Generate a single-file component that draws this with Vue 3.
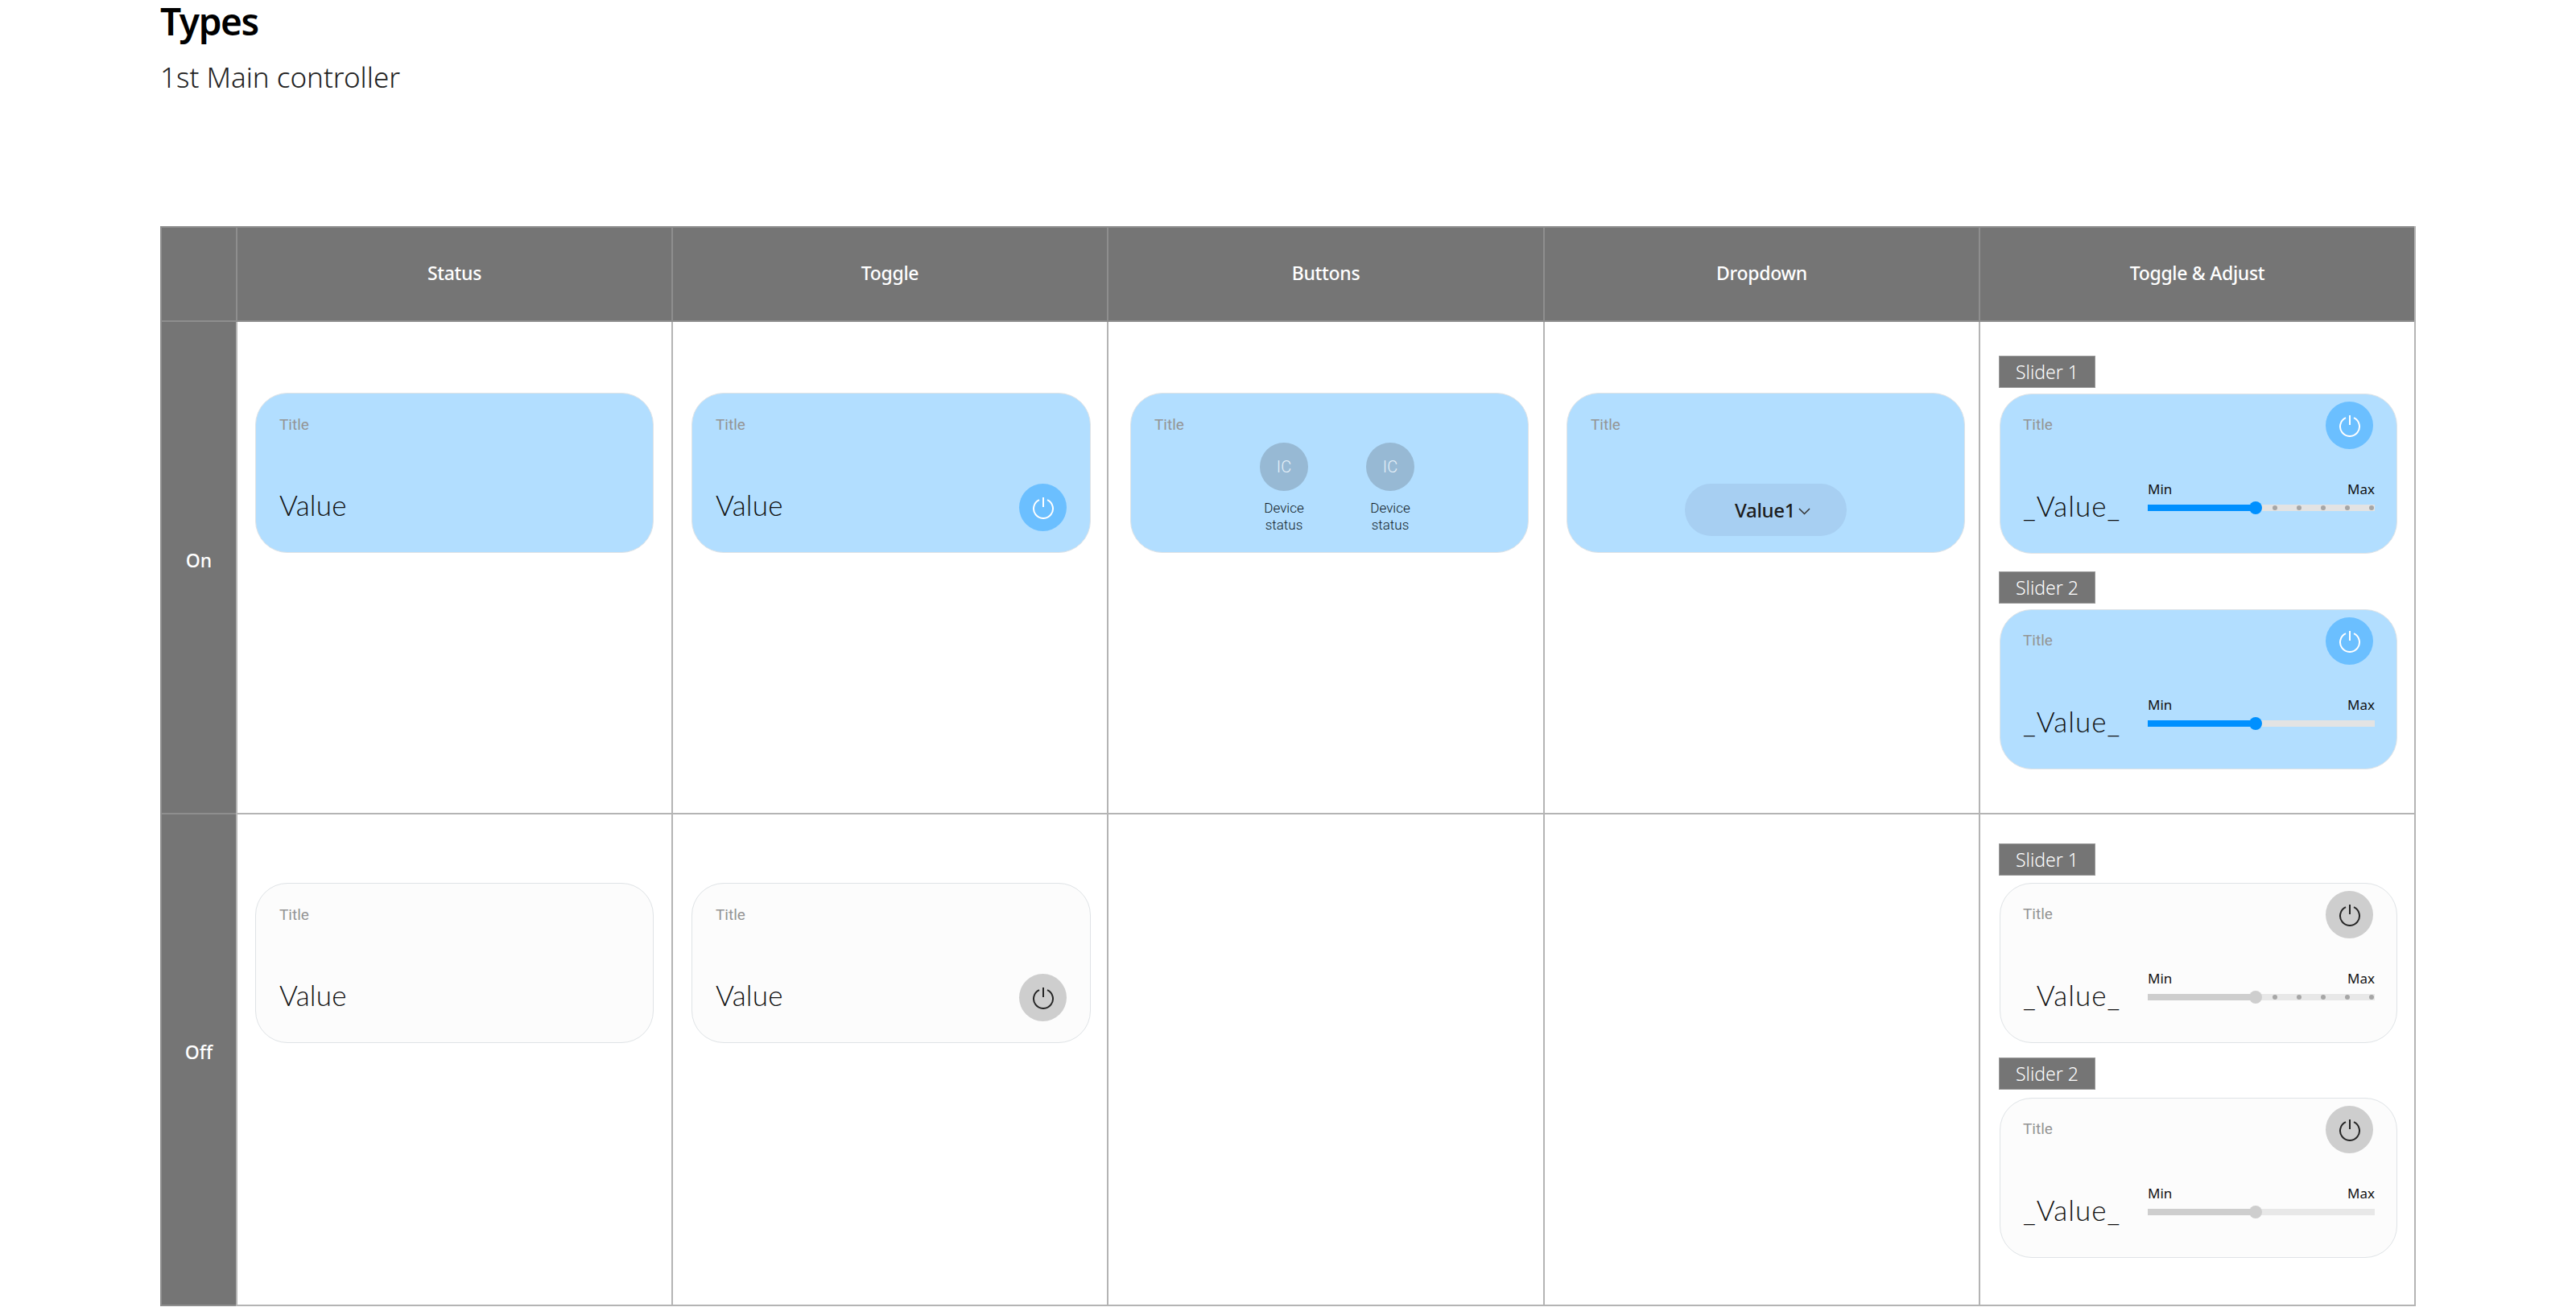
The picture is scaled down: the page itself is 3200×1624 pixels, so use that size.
<script setup>
const columns = ['Status', 'Toggle', 'Buttons', 'Dropdown', 'Toggle & Adjust']
const dots = [0, 1, 2, 3, 4]
</script>

<template>
  <div class="page">
    <header class="head">
      <h1 class="h-title">Types</h1>
      <p class="h-sub">1st Main controller</p>
    </header>

    <div class="grid">
      <div class="hcell corner"></div>
      <div v-for="c in columns" :key="c" class="hcell">{{ c }}</div>

      <!-- On -->
      <div class="side">On</div>
      <div class="cell first"><div class="card on"><span class="t">Title</span><div class="row"><span class="v">Value</span></div></div></div>
      <div class="cell">
        <div class="card on toggle">
          <span class="t">Title</span>
          <div class="row">
            <span class="v">Value</span>
            <span class="pw pw-on"><svg width="28" height="28" viewBox="0 0 28 28"><path d="M9 4.1A12 12 0 1 0 19 4.1M14 1V13" /></svg></span>
          </div>
        </div>
      </div>
      <div class="cell inset">
        <div class="card on btns">
          <span class="t">Title</span>
          <div class="ics">
            <div class="ic-wrap" v-for="n in 2" :key="n">
              <span class="ic">IC</span>
              <span class="ic-label">Device<br />status</span>
            </div>
          </div>
        </div>
      </div>
      <div class="cell inset">
        <div class="card on">
          <span class="t">Title</span>
          <div class="row dd-row">
            <span class="pill">Value1<svg width="15" height="9" viewBox="0 0 15 9"><path d="M1 1l6.5 6.5L14 1" /></svg></span>
          </div>
        </div>
      </div>
      <div class="cell adjust">
        <div class="tag">Slider 1</div>
        <div class="card on slim">
          <div class="top"><span class="t">Title</span><span class="pw pw-on"><svg width="28" height="28" viewBox="0 0 28 28"><path d="M9 4.1A12 12 0 1 0 19 4.1M14 1V13" /></svg></span></div>
          <div class="adj">
            <span class="v wide">_Value_</span>
            <div class="sl">
              <div class="sl-labels"><span>Min</span><span>Max</span></div>
              <div class="track"><div class="fill"></div><div class="thumb"></div><div class="ticks"><i v-for="d in dots" :key="d"></i></div></div>
            </div>
          </div>
        </div>
        <div class="tag second">Slider 2</div>
        <div class="card on slim">
          <div class="top"><span class="t">Title</span><span class="pw pw-on"><svg width="28" height="28" viewBox="0 0 28 28"><path d="M9 4.1A12 12 0 1 0 19 4.1M14 1V13" /></svg></span></div>
          <div class="adj">
            <span class="v wide">_Value_</span>
            <div class="sl">
              <div class="sl-labels"><span>Min</span><span>Max</span></div>
              <div class="track"><div class="fill"></div><div class="thumb"></div></div>
            </div>
          </div>
        </div>
      </div>

      <!-- Off -->
      <div class="side side-off">Off</div>
      <div class="cell first off-cell"><div class="card off"><span class="t">Title</span><div class="row"><span class="v">Value</span></div></div></div>
      <div class="cell off-cell">
        <div class="card off toggle">
          <span class="t">Title</span>
          <div class="row">
            <span class="v">Value</span>
            <span class="pw pw-off"><svg width="28" height="28" viewBox="0 0 28 28"><path d="M9 4.1A12 12 0 1 0 19 4.1M14 1V13" /></svg></span>
          </div>
        </div>
      </div>
      <div class="cell off-cell"></div>
      <div class="cell off-cell"></div>
      <div class="cell adjust off-adjust">
        <div class="tag">Slider 1</div>
        <div class="card off slim">
          <div class="top"><span class="t">Title</span><span class="pw pw-off"><svg width="28" height="28" viewBox="0 0 28 28"><path d="M9 4.1A12 12 0 1 0 19 4.1M14 1V13" /></svg></span></div>
          <div class="adj">
            <span class="v wide">_Value_</span>
            <div class="sl">
              <div class="sl-labels"><span>Min</span><span>Max</span></div>
              <div class="track"><div class="fill"></div><div class="thumb"></div><div class="ticks"><i v-for="d in dots" :key="d"></i></div></div>
            </div>
          </div>
        </div>
        <div class="tag second">Slider 2</div>
        <div class="card off slim">
          <div class="top"><span class="t">Title</span><span class="pw pw-off"><svg width="28" height="28" viewBox="0 0 28 28"><path d="M9 4.1A12 12 0 1 0 19 4.1M14 1V13" /></svg></span></div>
          <div class="adj">
            <span class="v wide">_Value_</span>
            <div class="sl">
              <div class="sl-labels"><span>Min</span><span>Max</span></div>
              <div class="track"><div class="fill"></div><div class="thumb"></div></div>
            </div>
          </div>
        </div>
      </div>
    </div>
  </div>
</template>

<style>
html, body { margin: 0; background: #fff; }
</style>

<style scoped>
.page {
  width: 3200px;
  height: 1624px;
  padding-left: 199px;
  box-sizing: border-box;
  font-family: "Noto Sans", "Open Sans", sans-serif;
  color: #111;
  overflow: hidden;
}
.head { height: 281px; }
.h-title {
  margin: 0;
  font-size: 46px;
  line-height: 52px;
  font-weight: 600;
  letter-spacing: -1.4px;
  color: #000;
}
.h-sub {
  margin: 20px 0 0;
  font-size: 35px;
  line-height: 48px;
  font-weight: 300;
  color: #222;
}

.grid {
  width: 2802px;
  display: grid;
  grid-template-columns: 94px 541px 541px 542px 541px 541px;
  grid-template-rows: 119px 612px 611px;
  border-right: 2px solid #b4b4b4;
  box-sizing: border-box;
}
.hcell {
  display: flex;
  align-items: center;
  justify-content: center;
  background: #757575;
  border-top: 2px solid #8e8e8e;
  border-left: 2px solid #8e8e8e;
  border-bottom: 2px solid #8e8e8e;
  padding-bottom: 3px;
  color: #fff;
  font-size: 23px;
  font-weight: 500;
  letter-spacing: -.3px;
  box-sizing: border-box;
}
.side {
  display: flex;
  align-items: center;
  justify-content: center;
  background: #757575;
  border-left: 2px solid #8e8e8e;
  border-bottom: 2px solid #8e8e8e;
  padding-bottom: 18px;
  color: #fff;
  font-size: 23px;
  font-weight: 500;
  box-sizing: border-box;
}
.side-off { padding-bottom: 20px; }
.cell {
  padding: 88px 23px 0;
  border-left: 2px solid #b4b4b4;
  border-bottom: 2px solid #b4b4b4;
  box-sizing: border-box;
}
.cell.first { padding-left: 22px; }
.cell.inset { padding-left: 27px; }
.cell.off-cell { padding-top: 85px; }
.cell.adjust { padding: 42px 24px 0; }
.cell.off-adjust { padding-top: 36px; }

.card {
  height: 199px;
  width: 495px;
  box-sizing: border-box;
  border-radius: 40px;
  padding: 27px 29px 26px;
  display: flex;
  flex-direction: column;
  justify-content: space-between;
  border: 1px solid #dfe3e6;
}
.card.toggle { width: 496px; }
.card.on { background: #b2deff; }
.card.off { background: #fcfcfc; }
.t {
  font-family: Roboto, "Noto Sans", sans-serif;
  font-size: 19px;
  line-height: 24px;
  color: #949494;
}
.v {
  font-family: Lato, "Noto Sans", sans-serif;
  font-size: 35px;
  line-height: 50px;
  font-weight: 300;
  letter-spacing: .2px;
  color: #111;
}
.row {
  display: flex;
  align-items: center;
  justify-content: space-between;
  min-height: 59px;
}
.row .v { margin-bottom: 8px; }
.pw {
  width: 59px;
  height: 59px;
  border-radius: 50%;
  display: flex;
  align-items: center;
  justify-content: center;
  flex: none;
}
.pw svg { fill: none; stroke-width: 2; }
.pw-on { background: #6bbfff; }
.pw-on svg { stroke: #fff; }
.pw-off { background: #cecece; }
.pw-off svg { stroke: #252525; }

.btns { padding-bottom: 0; justify-content: flex-start; }
.ics {
  display: flex;
  justify-content: center;
  gap: 72px;
  margin-top: 10px;
  padding-left: 19px;
}
.ic-wrap {
  display: flex;
  flex-direction: column;
  align-items: center;
  width: 60px;
}
.ic {
  width: 60px;
  height: 60px;
  border-radius: 50%;
  background: #97b9d4;
  color: #e8f2fa;
  font-family: Roboto, sans-serif;
  font-size: 20px;
  font-weight: 300;
  display: flex;
  align-items: center;
  justify-content: center;
}
.ic-label {
  margin-top: 11px;
  font-family: Roboto, sans-serif;
  font-size: 17px;
  font-weight: 300;
  line-height: 21px;
  text-align: center;
  white-space: nowrap;
  color: #0f1a26;
}
.dd-row { justify-content: flex-start; padding-left: 117px; margin-bottom: -6px; }
.pill {
  width: 201px;
  height: 65px;
  box-sizing: border-box;
  padding-left: 62px;
  border-radius: 33px;
  background: #a7cff2;
  font-size: 24px;
  font-weight: 500;
  letter-spacing: -.3px;
  color: #1c1c1c;
  display: flex;
  align-items: center;
  gap: 4px;
}
.pill svg { fill: none; stroke: #333; stroke-width: 1.5; margin-top: 3px; }

.tag {
  width: 120px;
  height: 40px;
  box-sizing: border-box;
  margin-left: -1px;
  background: #757575;
  border: 1px solid #9a9a9a;
  color: #fff;
  font-size: 23px;
  font-weight: 300;
  display: flex;
  align-items: center;
  justify-content: center;
  margin-bottom: 7px;
}
.tag.second { margin-top: 22px; }
.off-adjust .tag { margin-bottom: 9px; }
.off-adjust .tag.second { margin-top: 18px; margin-bottom: 10px; }

.card.slim { width: 494px; padding: 9px 29px 0 28px; justify-content: flex-start; }
.top {
  display: flex;
  justify-content: space-between;
  align-items: center;
}
.top .t { margin-top: -2px; }
.adj {
  display: flex;
  align-items: flex-start;
  margin-top: 39px;
}
.wide { width: 155px; flex: none; margin-top: 6px; letter-spacing: 1px; }
.sl { width: 282px; flex: none; }
.sl-labels {
  display: flex;
  justify-content: space-between;
  font-size: 17px;
  line-height: 22px;
  color: #111;
}
.track {
  position: relative;
  height: 8px;
  margin-top: 8px;
  background: #e3e3e3;
}
.fill {
  position: absolute;
  left: 0;
  top: 0;
  bottom: 0;
  width: 134px;
  background: #0090ff;
}
.thumb {
  position: absolute;
  left: 126px;
  top: -4px;
  width: 16px;
  height: 16px;
  border-radius: 50%;
  background: #0090ff;
}
.off .fill, .off .thumb { background: #cecece; }
.off .track { background: #e8e8e8; }
.ticks {
  position: absolute;
  left: 155px;
  right: 1px;
  top: 1px;
  display: flex;
  justify-content: space-between;
}
.ticks i {
  width: 6px;
  height: 6px;
  border-radius: 50%;
  background: #a6a6a6;
}
</style>
